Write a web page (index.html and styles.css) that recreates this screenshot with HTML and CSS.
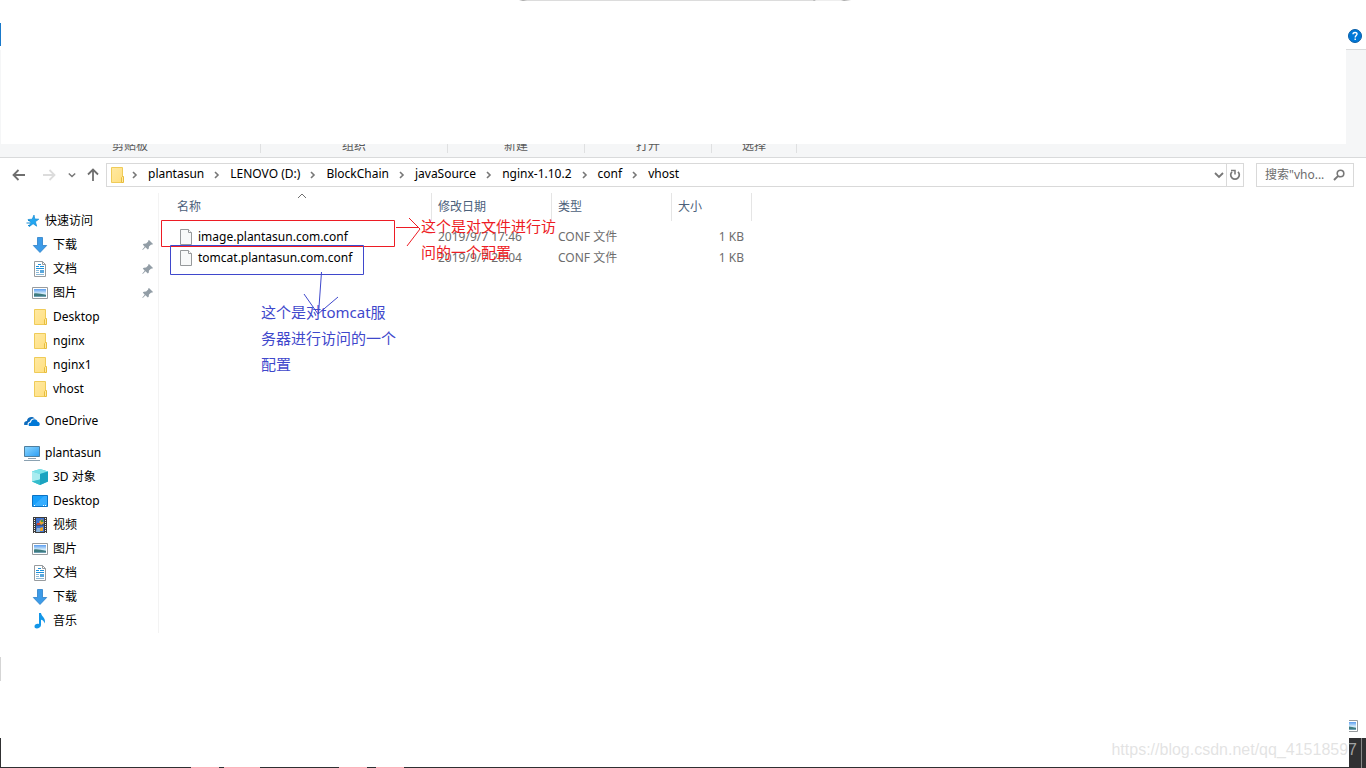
FILE: index.html
```html
<!DOCTYPE html>
<html lang="zh-CN">
<head>
<meta charset="utf-8">
<title>vhost</title>
<link rel="stylesheet" href="styles.css">
</head>
<body>
<svg class="defs" aria-hidden="true">
  <defs>
    <linearGradient id="gFolder" x1="0" y1="0" x2="1" y2="1"><stop offset="0" stop-color="#ffe9a2"/><stop offset="1" stop-color="#ffdf80"/></linearGradient>
    <linearGradient id="gScreen" x1="0" y1="0" x2="1" y2="1"><stop offset="0" stop-color="#8fd8ff"/><stop offset="1" stop-color="#2a9df4"/></linearGradient>
    <linearGradient id="gSky" x1="0" y1="0" x2="0" y2="1"><stop offset="0" stop-color="#5b9df0"/><stop offset=".55" stop-color="#d5ecfa"/><stop offset="1" stop-color="#5f94a8"/></linearGradient>
  </defs>
  <symbol id="folder" viewBox="-1 0 16 16"><path d="M1.5.5h11v15h-11z" fill="url(#gFolder)" stroke="#efcb58"/><path d="M11.500 15.500v-5l1-1h1v6z" fill="#ffe9a2" stroke="#e8bd3c"/></symbol>
  <symbol id="file" viewBox="0 0 14 16"><path d="M1.500.500h8l3 3v12h-11z" fill="#f8f9f9" stroke="#96999b"/><path d="M9.500.500v3h3" fill="#fff" stroke="#96999b"/></symbol>
  <symbol id="star" viewBox="0 0 16 16"><path d="M10 2l.8 4 4 .2-3.400 2.500 1.300 4.500-3.600-2.500-3.900 3 1.500-4.500L4 6.500l4.200-.3z" fill="#22a7f2" stroke="#168bd2" stroke-width=".7"/><path d="M4 7.500h2M2.500 10h3.500M4 12.500h2" stroke="#168bd2"/></symbol>
  <symbol id="down" viewBox="0 0 16 16"><path d="M5.500.5h5v8h4.200L8 15.500 1.300 8.500h4.200z" fill="#3c9be8" stroke="#2b7fc8" stroke-width=".8"/></symbol>
  <symbol id="doc" viewBox="0 0 16 16"><path d="M2.500.500h8l3 3v12h-11z" fill="#fff" stroke="#979b9e"/><path d="M10.500.500v3h3" fill="none" stroke="#979b9e"/><path d="M6 3.500h3M4 5.500h3M8 5.500h4M4 7.500h8" stroke="#1c91db"/><path d="M4 9.500h3M4 11.500h3M4 13.500h8" stroke="#8cb9d6"/><path d="M8 9h4v3H8z" fill="#5aa7dc"/></symbol>
  <symbol id="pic" viewBox="0 0 16 16"><path d="M.5 2.500h15v11H.5z" fill="#fff" stroke="#979b9e"/><path d="M2 4h12v8H2z" fill="url(#gSky)"/><path d="M2 8.500c4-.5 7 .5 12 1.500v1H2z" fill="#3f7c80"/></symbol>
  <symbol id="cloud" viewBox="0 0 16 16"><path d="M.2 12c-.5-3 1-4 2.800-4 0-3.500 5.500-5.500 8-2.200C8.500 5 6.500 6.500 6 8.500 4 9 3.300 10.500 3.700 12z" fill="#0f6cbd"/><path d="M5 13c-1-2.200.2-3.500 2-3.500.3-4.400 6.500-4 6.500-.8 2.600.3 3 3.800.8 4.300z" fill="#0078d7"/></symbol>
  <symbol id="pc" viewBox="0 0 16 16"><path d="M.5 1.500h15v10H.5z" fill="url(#gScreen)" stroke="#4e7f9f"/><path d="M4 13.500h8M0 15.500h16" stroke="#8ba1b1"/></symbol>
  <symbol id="cube" viewBox="0 0 16 16"><path d="M8 0l8 2.500v10L8 16l-8-3.500v-10z" fill="#3fc9d8"/><path d="M8 0l8 2.500L8 5 0 2.500z" fill="#7de2e8"/><path d="M0 2.500L8 5v5.500l-8 2z" fill="#a9ecf0"/><path d="M8 5l8-2.500v10L8 16z" fill="#1ba3c0"/><path d="M0 12.500l8-2V16z" fill="#35bccb"/></symbol>
  <symbol id="desk" viewBox="0 0 16 16"><path d="M.5 2.500h15v11H.5z" fill="#18a0fb" stroke="#0b72c4"/><path d="M1 13L12 3h3v10z" fill="#35adff"/><path d="M2 12.500h2M11 12.500h3" stroke="#fff" stroke-dasharray="1 1"/></symbol>
  <symbol id="video" viewBox="0 0 16 16"><path d="M1 0h14v16H1z" fill="#3b3b3b"/><path d="M4 1h8v6.500H4zM4 8.500h8V15H4z" fill="#3e72cf"/><path d="M2.500 1v15M13.500 1v15" stroke="#eee" stroke-dasharray="1 1"/><path d="M7 5l3-3 2 4-3 2zM8 11l3-1v4H8z" fill="#eba52b"/><path d="M5 6h3v2H5z" fill="#cf4436"/><path d="M5 11h3v4H4z" fill="#8fb5d8"/><path d="M9 3h2v2H9z" fill="#4c9940"/></symbol>
  <symbol id="music" viewBox="0 0 16 16"><path d="M7 0h2c.3 3.500 5.500 5 3.500 10.500C12.300 8 10.500 7 9 6.700V12c0 3.500-6.500 5-6.500 1.500 0-2.300 2.500-3.200 4.500-2.500z" fill="#1296e8"/></symbol>
  <symbol id="pin" viewBox="0 0 12 12"><path d="M7 1l4 4-1 .7-.8-.2L7 7.500l-.3 2.200-.9.8-2.300-2.200L.8 11l-.5-.5L2.700 7.700.8 5.500l1-.8 2.300-.1 2.100-2-.1-.9z" fill="#929da6"/></symbol>
  <symbol id="chev" viewBox="0 0 6 8"><path d="M1 1l3 3-3 3" fill="none" stroke="#777" stroke-width="1.600"/></symbol>
  <symbol id="chevdown" viewBox="0 0 10 8"><path d="M1 2l4 4 4-4" fill="none" stroke="#777" stroke-width="1.800"/></symbol>
  <symbol id="arrow" viewBox="0 0 14 12"><path d="M13 6H1.500M6.500 1l-5 5 5 5" fill="none" stroke="currentColor" stroke-width="1.800"/></symbol>
</svg>

<header class="ribbon">
  <span class="tooltip-edge"></span>
  <div class="tabs">
    <span class="file-tab"></span>
    <button class="help" aria-label="帮助"><svg viewBox="0 0 14 14"><circle cx="7" cy="7" r="6.500" fill="#0078d7" stroke="#0b5ea6"/><path d="M5 5.200C5 2.800 9.200 2.900 9 5.200 8.900 6.500 7.200 6.600 7.200 8.400M7.200 9.500v1.600" fill="none" stroke="#fff" stroke-width="1.400"/></svg></button>
  </div>
  <div class="ribbon-body"><div class="blank"></div></div>
  <div class="groups">
    <span class="group g1">剪贴板</span><span class="group g2">组织</span><span class="group g3">新建</span><span class="group g4">打开</span><span class="group g5">选择</span>
  </div>
</header>

<nav class="bar">
  <div class="history">
    <button class="nav-btn" aria-label="后退"><svg class="arrow"><use href="#arrow"/></svg></button>
    <button class="nav-btn off" aria-label="前进"><svg class="arrow flip"><use href="#arrow"/></svg></button>
    <button class="nav-btn small" aria-label="最近"><svg class="tiny"><use href="#chevdown"/></svg></button>
    <button class="nav-btn up" aria-label="上移"><svg class="arrow turn"><use href="#arrow"/></svg></button>
  </div>
  <div class="address">
    <svg class="i16"><use href="#folder"/></svg>
    <svg class="chev"><use href="#chev"/></svg><button class="crumb">plantasun</button>
    <svg class="chev"><use href="#chev"/></svg><button class="crumb">LENOVO (D:)</button>
    <svg class="chev"><use href="#chev"/></svg><button class="crumb">BlockChain</button>
    <svg class="chev"><use href="#chev"/></svg><button class="crumb">javaSource</button>
    <svg class="chev"><use href="#chev"/></svg><button class="crumb">nginx-1.10.2</button>
    <svg class="chev"><use href="#chev"/></svg><button class="crumb">conf</button>
    <svg class="chev"><use href="#chev"/></svg><button class="crumb">vhost</button>
    <button class="drop" aria-label="展开"><svg class="dropicon"><use href="#chevdown"/></svg></button>
    <button class="refresh" aria-label="刷新"><svg viewBox="0 0 12 12"><path d="M9 2.800A4.300 4.300 0 1 1 3 2.800" fill="none" stroke="#777" stroke-width="1.700"/><path d="M2 1.500h4v4" fill="none" stroke="#777" stroke-width="1.500"/></svg></button>
  </div>
  <label class="search">
    <input type="text" placeholder="搜索&quot;vho..." aria-label="搜索">
    <svg viewBox="0 0 12 12"><circle cx="7.500" cy="4.500" r="3.300" fill="none" stroke="#777" stroke-width="1.600"/><path d="M5.200 6.800L1 11" stroke="#777" stroke-width="1.900"/></svg>
  </label>
</nav>

<main class="main">
  <aside class="side">
    <a class="item root" href="#"><svg class="i16"><use href="#star"/></svg>快速访问</a>
    <a class="item" href="#"><svg class="i16"><use href="#down"/></svg>下载<svg class="pin"><use href="#pin"/></svg></a>
    <a class="item" href="#"><svg class="i16"><use href="#doc"/></svg>文档<svg class="pin"><use href="#pin"/></svg></a>
    <a class="item" href="#"><svg class="i16"><use href="#pic"/></svg>图片<svg class="pin"><use href="#pin"/></svg></a>
    <a class="item" href="#"><svg class="i16"><use href="#folder"/></svg>Desktop</a>
    <a class="item" href="#"><svg class="i16"><use href="#folder"/></svg>nginx</a>
    <a class="item" href="#"><svg class="i16"><use href="#folder"/></svg>nginx1</a>
    <a class="item" href="#"><svg class="i16"><use href="#folder"/></svg>vhost</a>
    <a class="item root spaced" href="#"><svg class="i16"><use href="#cloud"/></svg>OneDrive</a>
    <a class="item root spaced" href="#"><svg class="i16"><use href="#pc"/></svg>plantasun</a>
    <a class="item" href="#"><svg class="i16"><use href="#cube"/></svg>3D 对象</a>
    <a class="item" href="#"><svg class="i16"><use href="#desk"/></svg>Desktop</a>
    <a class="item" href="#"><svg class="i16"><use href="#video"/></svg>视频</a>
    <a class="item" href="#"><svg class="i16"><use href="#pic"/></svg>图片</a>
    <a class="item" href="#"><svg class="i16"><use href="#doc"/></svg>文档</a>
    <a class="item" href="#"><svg class="i16"><use href="#down"/></svg>下载</a>
    <a class="item" href="#"><svg class="i16"><use href="#music"/></svg>音乐</a>
  </aside>
  <section class="files">
    <table class="list">
      <thead>
        <tr><th class="c-name">名称<svg class="sort" viewBox="0 0 10 6"><path d="M1 5l4-4 4 4" fill="none" stroke="#6f6f6f"/></svg></th><th class="c-date">修改日期</th><th class="c-type">类型</th><th class="c-size">大小</th></tr>
      </thead>
      <tbody>
        <tr><td class="name"><span class="fname"><svg class="fileicon"><use href="#file"/></svg>image.plantasun.com.conf</span></td><td>2019/9/7 17:46</td><td>CONF 文件</td><td class="size">1 KB</td></tr>
        <tr><td class="name"><span class="fname"><svg class="fileicon"><use href="#file"/></svg>tomcat.plantasun.com.conf</span></td><td>2019/9/7 20:04</td><td>CONF 文件</td><td class="size">1 KB</td></tr>
      </tbody>
    </table>
    <svg class="marks" viewBox="0 0 400 200" fill="none">
      <g stroke="#ed1c24"><path d="M2.500 27.500h233v26h-233z"/><path d="M237 34.500h23M250 25l11 11-13 17"/></g>
      <g stroke="#3f48cc"><path d="M11.500 52.500h193v29h-193z"/><path d="M162.500 79l-3 42M145 101l14 20 20-17"/></g>
    </svg>
    <p class="note red">这个是对文件进行访<br>问的一个配置</p>
    <p class="note blue">这个是对tomcat服<br>务器进行访问的一个<br>配置</p>
  </section>
</main>

<footer class="foot">
  <div class="status"><span class="edge"></span><span class="view"><svg class="viewicon"><use href="#pic"/></svg></span></div>
  <div class="taskbar">
    <div class="cover"></div>
    <div class="apps"><i class="a1"></i><i class="a2"></i><i class="a3"></i><i class="a4"></i></div>
    <span class="water">https://blog.csdn.net/qq_41518597</span>
  </div>
</footer>
</body>
</html>
```
FILE: styles.css
```css
* { box-sizing: border-box; }
body {
  margin: 0;
  min-height: 100vh;
  display: flex;
  flex-direction: column;
  background: #fff;
  color: #000;
  font: 12px/16px "Noto Sans", "Noto Sans CJK SC", sans-serif;
}
button { border: 0; padding: 0; background: none; font: inherit; color: inherit; }
svg { display: block; flex: none; }
.defs { position: absolute; width: 0; height: 0; }
.i16 { width: 16px; height: 16px; }

.ribbon { position: relative; border-bottom: 1px solid #d9dadb; }
.tooltip-edge {
  position: absolute;
  top: 0;
  left: 38%;
  width: 332px;
  height: 1px;
  background: linear-gradient(90deg, #fff, #aaa 4px, #dcdcdc 8px, #dcdcdc 294px, #aaa 295px, #eee 297px, #eee 322px, #aaa 325px, #fff);
}
.tabs {
  display: flex;
  justify-content: space-between;
  height: 50px;
  padding: 23px 4px 0 0;
  background: linear-gradient(#dadbdc, #dadbdc) right bottom / 20px 1px no-repeat;
}
.file-tab { width: 1px; height: 23px; background: #1979ca; }
.help { margin-top: 6px; width: 14px; height: 14px; }
.ribbon-body { background: #f5f6f7; padding: 0 20px 0 1px; }
.blank { height: 94px; background: #fff; }
.groups { display: flex; height: 13px; overflow: hidden; background: #f5f6f7; color: #5a5a5a; line-height: 14px; }
.group { display: flex; align-items: flex-end; justify-content: center; height: 9px; border-right: 1px solid #dfe0e1; }
.g1 { width: 261px; }
.g2 { width: 187px; }
.g3 { width: 137px; }
.g4 { width: 127px; }
.g5 { width: 85px; }

.bar { display: flex; align-items: center; height: 34px; padding-right: 12px; }
.history { display: flex; align-items: center; width: 106px; padding-left: 12px; color: #6f6f6f; }
.nav-btn { width: 30px; }
.nav-btn.off { width: 26px; color: #dcdcdc; }
.nav-btn.small { width: 18px; }
.nav-btn.up { width: 14px; }
.arrow { width: 14px; height: 12px; }
.flip { transform: rotate(180deg); }
.turn { transform: rotate(90deg); }
.tiny { width: 8px; height: 8px; }
.address { flex: 1; display: flex; align-items: center; height: 24px; padding-left: 2px; border: 1px solid #d9d9d9; }
.chev { width: 6px; height: 8px; margin: 0 10px; }
.address .i16 { margin-right: -3px; }
.crumb { padding-bottom: 2px; white-space: nowrap; }
.drop { margin-left: auto; width: 15px; display: flex; justify-content: center; }
.dropicon { width: 10px; height: 8px; }
.refresh { width: 17px; height: 22px; display: grid; place-items: center; border-left: 1px solid #d9d9d9; }
.refresh svg { width: 12px; height: 12px; }
.search { display: flex; align-items: center; width: 98px; height: 24px; margin-left: 12px; padding: 0 8px; border: 1px solid #d9d9d9; }
.search input { flex: 1; min-width: 0; border: 0; padding: 0; outline: 0; background: none; font: inherit; }
.search input::placeholder { color: #6d6d6d; opacity: 1; }
.search svg { width: 12px; height: 12px; }

.main { display: flex; flex: 1; align-items: flex-start; padding-top: 1px; }
.side { width: 159px; padding-top: 16px; border-right: 1px solid #f3f3f3; }
.item { display: flex; align-items: center; gap: 5px; height: 24px; padding: 0 4px 0 32px; color: inherit; text-decoration: none; }
.root { padding-left: 24px; }
.spaced { margin-top: 8px; }
.pin { width: 12px; height: 12px; margin-left: auto; }

.files { position: relative; flex: 1; }
.list { width: 593px; table-layout: fixed; border-collapse: separate; border-spacing: 0; }
.list th { position: relative; height: 28px; padding: 0 6px; border-right: 1px solid #e5e5e5; color: #4c607a; font-weight: 400; text-align: left; }
.list .c-name { width: 273px; padding-left: 18px; }
.list .c-date, .list .c-type { width: 120px; }
.list .c-size { width: 80px; }
.sort { position: absolute; left: 138px; top: 0; width: 10px; height: 6px; }
.list td { height: 21px; padding: 0 6px; color: #6d6d6d; white-space: nowrap; }
.list tbody tr:first-child td { height: 26px; padding-top: 5px; }
.list td.name { padding-left: 20px; color: #000; }
.list td.size { text-align: right; padding-right: 8px; }
.fname { display: flex; align-items: center; gap: 5px; }
.fileicon { width: 14px; height: 16px; }
.marks { position: absolute; left: 0; top: 0; width: 400px; height: 200px; }
.note { position: absolute; margin: 0; font-size: 15px; line-height: 26px; white-space: nowrap; }
.red { left: 262px; top: 20px; color: #ed1c24; }
.blue { left: 102px; top: 106px; color: #3f48cc; }

.foot { display: flex; flex-direction: column; }
.status { display: flex; justify-content: space-between; height: 81px; }
.edge { width: 1px; height: 24px; background: #d5d5d5; }
.view { display: flex; align-items: flex-end; width: 17px; padding-bottom: 4px; overflow: hidden; }
.viewicon { width: 16px; height: 16px; margin-left: -7px; }
.taskbar { position: relative; height: 30px; padding: 0 17px 1px 1px; background: linear-gradient(#888, #888) right 4px top / 1px 100% no-repeat #303032; }
.cover { height: 29px; background: #fff; }
.apps { display: flex; height: 1px; padding-left: 190px; }
.apps i { height: 1px; background: #fbb4bb; }
.a1 { width: 28px; margin-right: 5px; }
.a2 { width: 36px; margin-right: 79px; }
.a3 { width: 28px; margin-right: 9px; }
.a4 { width: 28px; }
.water { position: absolute; right: 9px; top: 3px; font: 16px/18px "Liberation Sans", Arial, sans-serif; color: rgba(215, 215, 215, .7); }
```
